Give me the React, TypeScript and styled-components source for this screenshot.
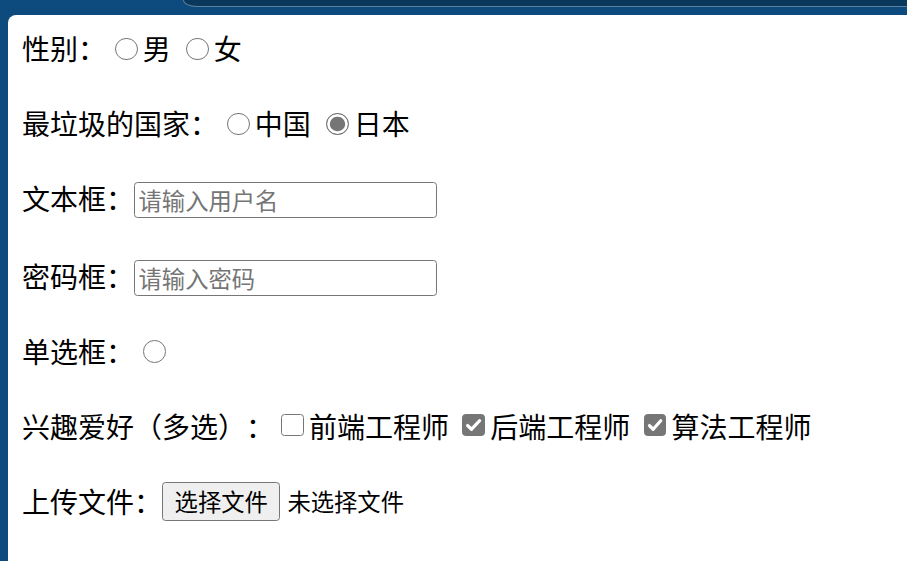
import React from 'react';
import styled, { createGlobalStyle } from 'styled-components';

const Global = createGlobalStyle`
  html, body { margin: 0; padding: 0; height: 100%; overflow: hidden; }
  body { background: #0d4b7e; }
  #root { height: 100%; }
`;

const Screen = styled.div`
  display: flex;
  flex-direction: column;
  height: 100vh;
  background: #0d4b7e;
`;

const TopStrip = styled.div`
  display: flex;
  flex: none;
  height: 15px;
`;

const StripGap = styled.div`
  flex: none;
  width: 183px;
`;

const DarkTab = styled.div`
  flex: 1;
  height: 7px;
  box-sizing: border-box;
  background: #0a385c;
  border-left: 1px solid #5f819b;
  border-bottom: 1px solid #5f819b;
  border-bottom-left-radius: 14px 7px;
`;

const Body = styled.div`
  display: flex;
  flex: 1;
  padding-left: 8px;
  min-height: 0;
`;

const Panel = styled.div`
  flex: 1;
  background: #ffffff;
  border-top-left-radius: 8px;
  overflow: hidden;
`;

const Form = styled.form`
  zoom: 1.75;
  display: flex;
  flex-direction: column;
  gap: 18.86px;
  padding: 7px 8px 0 8px;
  font-family: "Noto Sans CJK SC", "Noto Sans", sans-serif;
  color: #000;
  text-spacing-trim: space-all;
`;

const Row = styled.div<{ $shift?: number }>`
  height: 24px;
  line-height: 24px;
  font-size: 16px;
  white-space: nowrap;
  margin-top: ${(p) => p.$shift ?? 0}px;
`;

const Radio = styled.input.attrs({ type: 'radio' })`
  appearance: none;
  box-sizing: border-box;
  width: 13px;
  height: 13px;
  margin: 3px 3px 0 5px;
  border: 1px solid #767676;
  border-radius: 50%;
  background: #fff;
  &:checked {
    background: #767676;
    box-shadow: inset 0 0 0 1.6px #fff;
  }
`;

const checkSvg =
  "url(\"data:image/svg+xml,%3Csvg xmlns='http://www.w3.org/2000/svg' viewBox='0 0 13 13'%3E%3Cpath d='M3.2 6.8 L5.4 9 L9.9 4' fill='none' stroke='white' stroke-width='1.9' stroke-linecap='round' stroke-linejoin='round'/%3E%3C/svg%3E\")";

const Check = styled.input.attrs({ type: 'checkbox' })`
  appearance: none;
  box-sizing: border-box;
  width: 13px;
  height: 13px;
  margin: 3px 3px 1px 4px;
  border: 1px solid #767676;
  border-radius: 2px;
  background: #fff;
  &:checked {
    background: #767676 ${checkSvg} center / 13px 13px no-repeat;
  }
`;

const TextBox = styled.input`
  box-sizing: border-box;
  width: 173px;
  height: 20.6px;
  margin: 0 0 2.8px 0;
  padding: 1px 2px;
  border: 1px solid #767676;
  border-radius: 2px;
  font-family: "Noto Sans CJK SC", "Noto Sans", sans-serif;
  font-size: 13.33px;
  vertical-align: middle;
  &::placeholder { color: #757575; }
`;

const FileButton = styled.button`
  box-sizing: border-box;
  height: 22.3px;
  margin: 0 4px 5px 0;
  padding: 0 6.6px;
  border: 1px solid #767676;
  border-radius: 2px;
  background: #efefef;
  color: #000;
  font-family: "Noto Sans CJK SC", "Noto Sans", sans-serif;
  font-size: 13.33px;
  line-height: 20px;
  vertical-align: middle;
`;

const FileNote = styled.span`
  display: inline-block;
  font-size: 13.33px;
  line-height: 20px;
  margin-bottom: 5px;
  vertical-align: middle;
`;

export default function App() {
  return (
    <Screen>
      <Global />
      <TopStrip>
        <StripGap />
        <DarkTab />
      </TopStrip>
      <Body>
        <Panel>
          <Form onSubmit={(e) => e.preventDefault()}>
            <Row>
              性别：<Radio name="sex" />男{' '}<Radio name="sex" />女
            </Row>
            <Row>
              最垃圾的国家：<Radio name="country" />中国{' '}<Radio name="country" defaultChecked />日本
            </Row>
            <Row>
              文本框：<TextBox type="text" placeholder="请输入用户名" />
            </Row>
            <Row $shift={1.7}>
              密码框：<TextBox type="password" placeholder="请输入密码" />
            </Row>
            <Row>
              单选框：<Radio name="single" />
            </Row>
            <Row>
              兴趣爱好（多选）：<Check />前端工程师{' '}<Check defaultChecked />后端工程师{' '}<Check defaultChecked />算法工程师
            </Row>
            <Row>
              上传文件：<FileButton type="button">选择文件</FileButton><FileNote>未选择文件</FileNote>
            </Row>
          </Form>
        </Panel>
      </Body>
    </Screen>
  );
}
